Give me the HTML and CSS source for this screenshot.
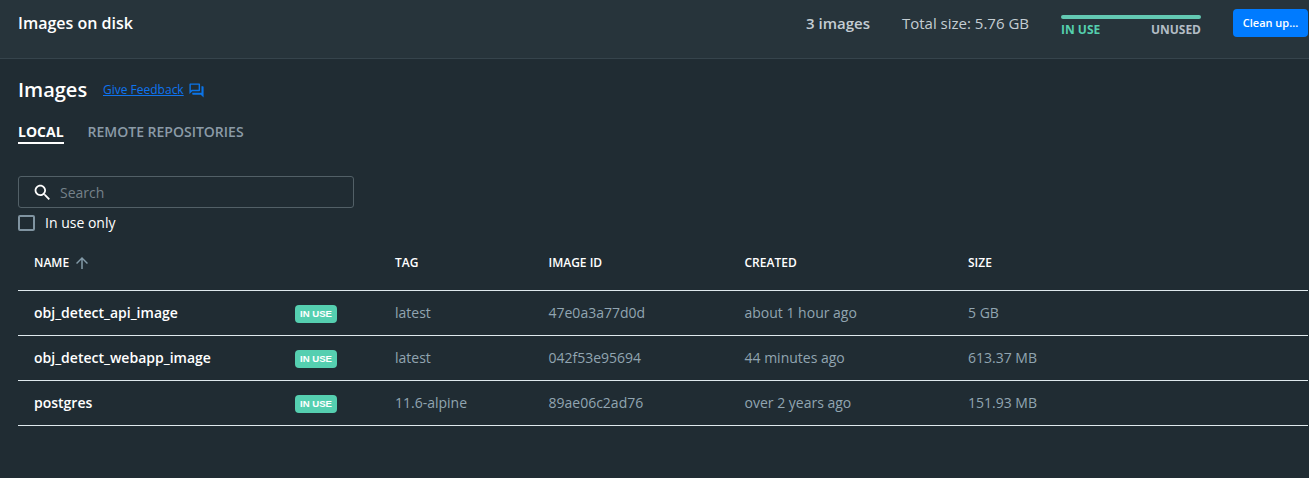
FILE: index.html
```html
<!DOCTYPE html>
<html lang="en">
<head>
<meta charset="utf-8">
<title>Images on disk</title>
<link rel="stylesheet" href="styles.css">
</head>
<body>
<header class="topbar">
  <h2 class="topbar-title">Images on disk</h2>
  <span class="count">3 images</span>
  <span class="total">Total size: 5.76 GB</span>
  <div class="usage">
    <div class="usage-bar"></div>
    <div class="usage-labels"><span class="used">IN USE</span><span class="unused">UNUSED</span></div>
  </div>
  <button class="cleanup">Clean up...</button>
</header>
<main class="content">
  <div class="heading">
    <h1 class="title">Images</h1>
    <a class="feedback" href="#">Give Feedback</a>
    <svg class="feedback-icon" viewBox="0 0 24 24"><path d="M15 4v7H5.17L4 12.17V4h11m1-2H3c-.55 0-1 .45-1 1v14l4-4h10c.55 0 1-.45 1-1V3c0-.55-.45-1-1-1zm5 4h-2v9H6v2c0 .55.45 1 1 1h11l4 4V7c0-.55-.45-1-1-1z"/></svg>
  </div>
  <nav class="tabs">
    <a class="tab tab-active">LOCAL</a>
    <a class="tab">REMOTE REPOSITORIES</a>
  </nav>
  <div class="search">
    <svg class="search-icon" viewBox="0 0 24 24"><path d="M15.5 14h-.79l-.28-.27C15.41 12.59 16 11.11 16 9.5 16 5.91 13.09 3 9.5 3S3 5.91 3 9.5 5.91 16 9.5 16c1.61 0 3.09-.59 4.23-1.57l.27.28v.79l5 4.99L20.49 19l-4.99-5zm-6 0C7.01 14 5 11.99 5 9.5S7.01 5 9.5 5 14 7.01 14 9.5 11.99 14 9.5 14z"/></svg>
    <span class="placeholder">Search</span>
  </div>
  <label class="filter"><span class="checkbox"></span><span class="filter-text">In use only</span></label>
  <div class="table">
    <div class="row row-head">
      <span class="name-head">NAME <svg class="sort-icon" viewBox="0 0 24 24"><path d="M4 12l1.41 1.41L11 7.83V20h2V7.83l5.58 5.59L20 12l-8-8-8 8z"/></svg></span>
      <span></span><span>TAG</span><span>IMAGE ID</span><span>CREATED</span><span>SIZE</span>
    </div>
    <div class="row">
      <span class="name">obj_detect_api_image</span><span class="badge">IN USE</span><span>latest</span><span>47e0a3a77d0d</span><span>about 1 hour ago</span><span>5 GB</span>
    </div>
    <div class="row">
      <span class="name">obj_detect_webapp_image</span><span class="badge">IN USE</span><span>latest</span><span>042f53e95694</span><span>44 minutes ago</span><span>613.37 MB</span>
    </div>
    <div class="row">
      <span class="name">postgres</span><span class="badge">IN USE</span><span>11.6-alpine</span><span>89ae06c2ad76</span><span>over 2 years ago</span><span>151.93 MB</span>
    </div>
  </div>
</main>
</body>
</html>
```
FILE: styles.css
```css
* { box-sizing: border-box; }
body {
  margin: 0;
  height: 478px;
  overflow: hidden;
  background: #202c33;
  color: #fff;
  font: 14px/20px "Open Sans", sans-serif;
}
h1, h2 { margin: 0; font-weight: 600; }
.topbar {
  display: flex;
  align-items: flex-start;
  height: 59px;
  padding: 9px 1px 0 18px;
  background: #27343b;
  border-bottom: 1px solid #36444c;
}
.topbar-title { flex: 1; font-size: 16px; line-height: 28px; }
.count, .total { color: #c4cdd3; font-size: 15px; line-height: 29px; }
.count { margin-right: 32px; font-weight: 600; }
.total { margin-right: 32px; }
.usage { width: 140px; margin-right: 32px; padding-top: 6px; }
.usage-bar { height: 4px; border-radius: 2px; background: #63c9b3; }
.usage-labels {
  display: flex;
  justify-content: space-between;
  padding-top: 2px;
  font-size: 12px;
  line-height: 17px;
  font-weight: 700;
}
.used { color: #55cfae; }
.unused { color: #b3bdc5; }
.cleanup {
  width: 75px;
  height: 28px;
  padding: 0;
  border: 0;
  border-radius: 4px;
  background: #007bff;
  color: #fff;
  font: 600 11px/28px "Open Sans", sans-serif;
}
.content { padding: 17px 1px 0 18px; }
.heading { display: flex; align-items: center; height: 28px; }
.title { width: 85px; font-size: 20px; line-height: 28px; }
.feedback { color: #0f74ef; font-size: 12px; }
.feedback-icon { width: 17px; height: 17px; margin-left: 4px; fill: #0b74e8; }
.tabs { display: flex; gap: 24px; padding-top: 18px; }
.tab { height: 22px; color: #8b9ba7; font-weight: 600; }
.tab-active { color: #fff; border-bottom: 2px solid #fff; font-weight: 700; }
.search {
  display: flex;
  align-items: center;
  width: 336px;
  height: 32px;
  margin-top: 32px;
  padding-left: 13px;
  border: 1px solid #526067;
  border-radius: 3px;
}
.search-icon { width: 21px; height: 21px; fill: #fff; }
.placeholder { margin-left: 7px; padding-top: 2px; color: #75818a; }
.filter { display: flex; align-items: center; height: 30px; }
.checkbox { width: 17px; height: 16px; border: 2px solid #8094a1; border-radius: 2px; }
.filter-text { margin-left: 10px; }
.row {
  display: grid;
  grid-template-columns: 261px 100px 153.5px 196px 223.5px 1fr;
  align-items: center;
  height: 45px;
  padding-left: 16px;
  border-bottom: 1px solid #dfe9ed;
  color: #91a5b1;
}
.row-head { height: 53px; padding-bottom: 2px; color: #fff; font-size: 12px; font-weight: 600; }
.name-head { display: flex; align-items: center; gap: 4px; }
.sort-icon { width: 18px; height: 18px; fill: #829aa8; }
.name { color: #fff; font-weight: 600; }
.badge {
  width: 42px;
  height: 18px;
  margin-top: 2px;
  border-radius: 4px;
  background: #55cfb0;
  color: #fff;
  font: bold 9.6px/18px "Liberation Sans", sans-serif;
  text-align: center;
}
```
